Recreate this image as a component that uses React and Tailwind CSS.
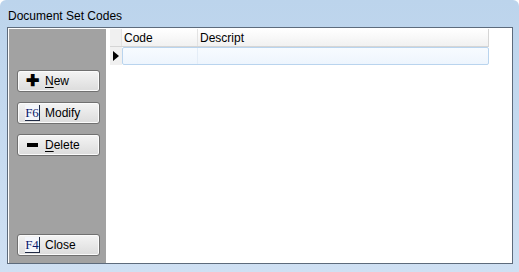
import { useState } from "react";

function KeyBox({ k }) {
  return (
    <span className="inline-flex items-center justify-center w-[16px] h-[16px] bg-[#f4f6fb] border-r border-b border-[#1f2a44] text-[#0b1a6b] text-[13px] leading-none" style={{ fontFamily: '"Liberation Serif", serif' }}>
      {k}
    </span>
  );
}

function PanelButton({ icon, children, className = "" }) {
  return (
    <button className={`w-[83px] h-[22px] flex items-center pl-[7px] gap-[5px] rounded-[3px] border border-[#707070] bg-gradient-to-b from-[#f4f4f4] to-[#dcdcdc] shadow-[inset_0_0_0_1px_#fbfbfb] text-[12px] text-black ${className}`}>
      <span className="w-[15px] flex justify-center">{icon}</span>
      <span>{children}</span>
    </button>
  );
}

export default function App() {
  const [rows] = useState([{ code: "", descript: "" }]);

  return (
    <div className="w-[519px] h-[272px] flex flex-col bg-gradient-to-b from-[#bcd4ec] to-[#cfe0f3] rounded-t-[6px] overflow-hidden" style={{ fontFamily: '"Liberation Sans", Arial, sans-serif' }}>
      {/* Title bar */}
      <div className="h-[27px] pl-[8px] pt-[7px] text-[12px] text-black">Document Set Codes</div>

      {/* Body */}
      <div className="ml-[7px] mr-[6px] h-[237px] border border-[#5d6b7c] bg-white flex">
        {/* Left button panel */}
        <div className="w-[99px] bg-[#a2a2a2] border-t border-l border-white border-r flex flex-col px-[8px] pt-[41px] pb-[7px]">
          <PanelButton icon={<span className="text-[16px] font-black leading-none">✚</span>}>
            <span className="underline underline-offset-2">N</span>ew
          </PanelButton>
          <PanelButton className="mt-[10px]" icon={<KeyBox k="F6" />}>Modify</PanelButton>
          <PanelButton className="mt-[10px]" icon={<span className="block w-[11px] h-[4px] bg-black" />}>
            <span className="underline underline-offset-2">D</span>elete
          </PanelButton>
          <div className="flex-1" />
          <PanelButton icon={<KeyBox k="F4" />}>Close</PanelButton>
        </div>

        {/* Grid */}
        <div className="flex-1 pl-[3px] pt-[1px] text-[12px] text-black">
          <div className="w-[379px] flex h-[18px] border-b border-[#d5d5d5] border-r bg-gradient-to-b from-white to-[#f1f1f1]">
            <div className="w-[12px] border-r border-[#e3e3e3] bg-[#f0f0f0]" />
            <div className="w-[76px] border-r border-[#e3e3e3] pl-[2px] leading-[18px]">Code</div>
            <div className="flex-1 pl-[2px] leading-[18px]">Descript</div>
          </div>
          {rows.map((r, i) => (
            <div key={i} className="w-[379px] flex h-[18px]">
              <div className="w-[12px] bg-[#f0f0f0] flex items-center justify-center">
                <span className="block w-0 h-0 border-y-[5px] border-y-transparent border-l-[6px] border-l-black" />
              </div>
              <div className="flex-1 flex border border-[#b9d4ee] rounded-[2px] bg-gradient-to-b from-[#f7fbff] to-[#eef5fd]">
                <div className="w-[75px] border-r border-[#e4edf7]">{r.code}</div>
                <div className="flex-1">{r.descript}</div>
              </div>
            </div>
          ))}
        </div>
      </div>
    </div>
  );
}
